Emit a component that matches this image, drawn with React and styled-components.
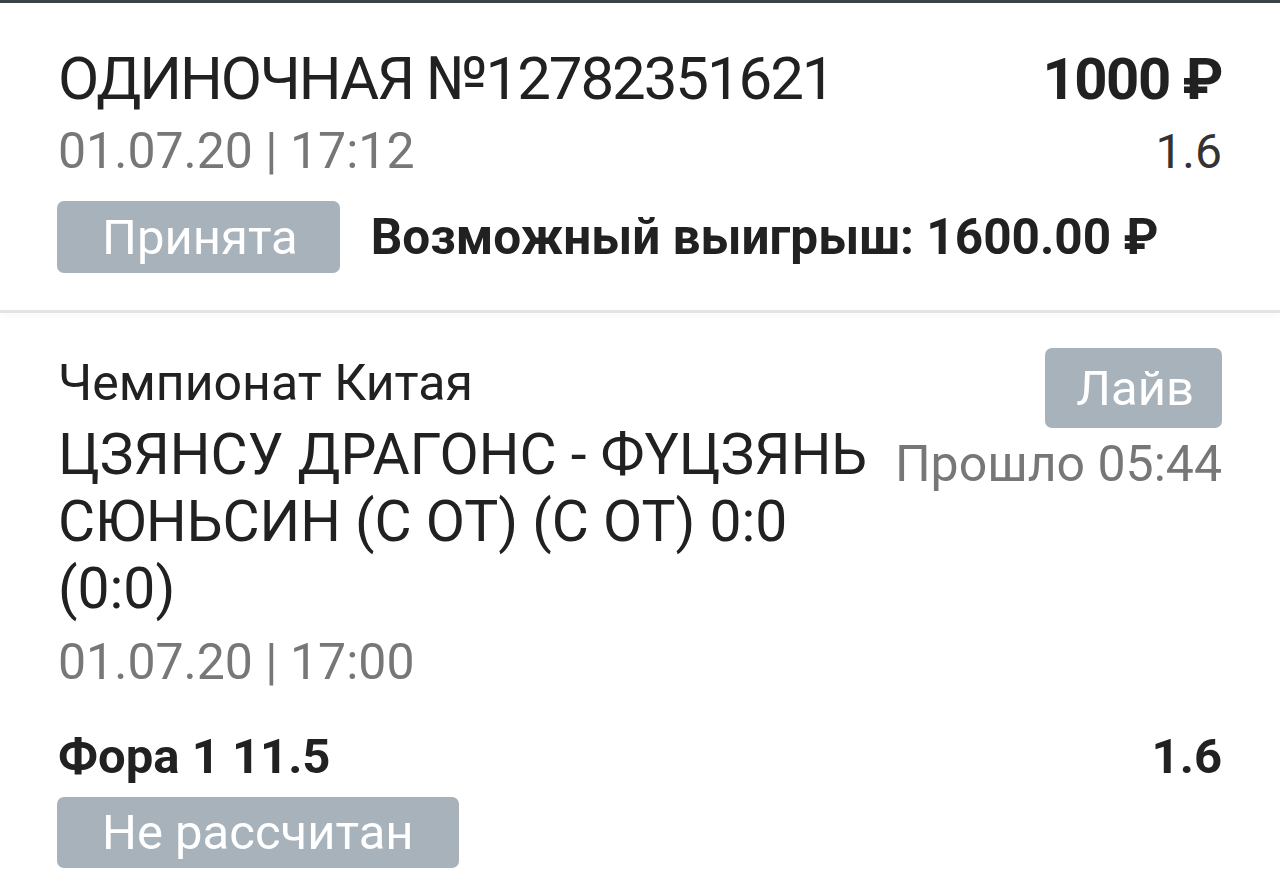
import React from 'react';
import styled, {createGlobalStyle} from 'styled-components';

const GlobalStyle = createGlobalStyle`
    html, body {
        margin: 0;
        padding: 0;
        background: #ffffff;
    }
    body {
        font-family: Roboto, "Noto Sans", "DejaVu Sans", sans-serif;
        color: #212121;
    }
`

const App = () =>{

    return(
        <>
            <GlobalStyle/>
            <Page>
                <TopBar/>
                <BetSection>
                    <Row>
                        <Title>ОДИНОЧНАЯ №12782351621</Title>
                        <Amount>1000 ₽</Amount>
                    </Row>
                    <Row gap="9px">
                        <Meta>01.07.20 | 17:12</Meta>
                        <Coef>1.6</Coef>
                    </Row>
                    <BadgeRow gap="21px">
                        <Badge h="72px" pad="0 42px 0 45px">Принята</Badge>
                        <Win>Возможный выигрыш: 1600.00 ₽</Win>
                    </BadgeRow>
                </BetSection>
                <Divider/>
                <EventSection>
                    <EventHead>
                        <EventInfo>
                            <League>Чемпионат Китая</League>
                            <Teams>ЦЗЯНСУ ДРАГОНС - ФҮЦЗЯНЬ СЮНЬСИН (С ОТ) (С ОТ) 0:0 (0:0)</Teams>
                            <Meta top="12px">01.07.20 | 17:00</Meta>
                        </EventInfo>
                        <Side>
                            <Badge h="80px" pad="0 28px 0 31px">Лайв</Badge>
                            <Elapsed>Прошло 05:44</Elapsed>
                        </Side>
                    </EventHead>
                    <Row gap="39px">
                        <Market>Фора 1 11.5</Market>
                        <Market>1.6</Market>
                    </Row>
                    <BadgeRow gap="12px">
                        <Badge h="71px" pad="0 45px">Не рассчитан</Badge>
                    </BadgeRow>
                </EventSection>
            </Page>
        </>
    )
}

export default App;


const Page = styled.div`
    width: 1280px;
    min-height: 893px;
    background: #ffffff;
`

const TopBar = styled.div`
    height: 3px;
    background-color: #3b4549;
`

const BetSection = styled.section`
    padding: 41px 58px 37px 57px;
`

const EventSection = styled.section`
    padding: 35px 58px 0 57px;
`

const Row = styled.div`
    display: flex;
    justify-content: space-between;
    align-items: baseline;
    margin-top: ${(props)=>props.gap || '0'};
    padding-left: 1px;
`

const Title = styled.div`
    font-size: 60px;
    line-height: 70px;
    color: #212121;
    letter-spacing: -2.1px;
`

const Amount = styled.div`
    font-size: 58px;
    line-height: 70px;
    font-weight: 700;
    color: #212121;
    letter-spacing: -1.5px;
`

const Meta = styled.div`
    font-size: 50px;
    line-height: 56px;
    color: #777777;
    margin-top: ${(props)=>props.top || '0'};
`

const Coef = styled.div`
    font-size: 48px;
    line-height: 56px;
    color: #333333;
`

const BadgeRow = styled.div`
    display: flex;
    align-items: center;
    gap: 31px;
    margin-top: ${(props)=>props.gap || '20px'};
`

const Badge = styled.div`
    height: ${(props)=>props.h};
    padding: ${(props)=>props.pad};
    display: flex;
    align-items: center;
    border-radius: 7px;
    background-color: #a8b2bb;
    color: #ffffff;
    font-size: 49px;
    box-sizing: border-box;
    white-space: nowrap;
`

const Win = styled.div`
    font-size: 49.5px;
    line-height: 56px;
    font-weight: 700;
    color: #212121;
`

const Divider = styled.div`
    height: 3px;
    background-color: #e4e4e4;
    box-shadow: 0 3px 6px rgba(0, 0, 0, 0.05);
`

const EventHead = styled.div`
    display: flex;
    justify-content: space-between;
    align-items: flex-start;
    gap: 20px;
`

const EventInfo = styled.div`
    flex: 1;
    padding-top: 7px;
    padding-left: 1px;
`

const League = styled.div`
    font-size: 50px;
    line-height: 56px;
    color: #212121;
`

const Teams = styled.div`
    margin-top: 10px;
    font-size: 57px;
    line-height: 67px;
    color: #212121;
    max-width: 830px;
`

const Side = styled.div`
    display: flex;
    flex-direction: column;
    align-items: flex-end;
`

const Elapsed = styled.div`
    margin-top: 8px;
    font-size: 50px;
    line-height: 56px;
    color: #777777;
`

const Market = styled.div`
    font-size: 49px;
    line-height: 56px;
    font-weight: 700;
    color: #212121;
`
